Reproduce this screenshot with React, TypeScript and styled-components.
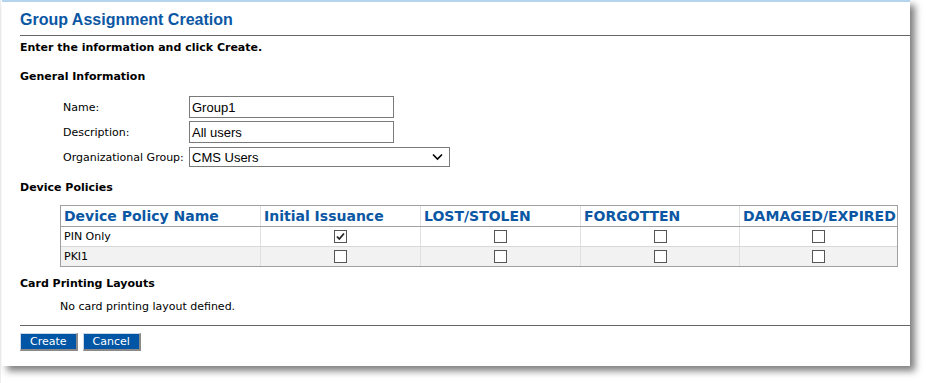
import styled, { createGlobalStyle } from "styled-components";

const GlobalStyle = createGlobalStyle`
  body {
    margin: 0;
    background: #ffffff;
    font-family: "DejaVu Sans", Verdana, sans-serif;
  }
`;

type Policy = {
  name: string;
  checks: boolean[];
};

const policies: Policy[] = [
  { name: "PIN Only", checks: [true, false, false, false] },
  { name: "PKI1", checks: [false, false, false, false] },
];

const columns = [
  "Device Policy Name",
  "Initial Issuance",
  "LOST/STOLEN",
  "FORGOTTEN",
  "DAMAGED/EXPIRED",
];

const Page = styled.div`
  padding: 0 0 17px 0;
  background: #fff;
  border-left: 1px solid #eeeeee;
`;

const Panel = styled.div`
  width: 890px;
  height: 364px;
  margin-left: 1px;
  background: #fff;
  border-top: 2px solid #b5d4ef;
  box-shadow: 5px 5px 7px rgba(0, 0, 0, 0.5);
  padding-left: 18px;
  box-sizing: content-box;
`;

const Title = styled.h1`
  margin: 0;
  padding-top: 8px;
  font-family: "Liberation Sans", Arial, sans-serif;
  font-size: 16px;
  line-height: 20px;
  font-weight: 700;
  color: #0b57a4;
`;

const Rule = styled.div<{ $gap: number }>`
  height: 1px;
  background: #666;
  margin-top: ${(p) => p.$gap}px;
`;

const Heading = styled.div<{ $gap: number }>`
  margin-top: ${(p) => p.$gap}px;
  font-size: 11px;
  line-height: 14px;
  font-weight: 700;
  color: #000;
`;

const Form = styled.div`
  display: grid;
  grid-template-columns: 126px auto;
  grid-auto-rows: 22px;
  row-gap: 3px;
  align-items: center;
  margin: 12px 0 0 43px;
`;

const Label = styled.div`
  font-size: 11px;
  color: #000;
`;

const TextBox = styled.div<{ $width: number; $height?: number }>`
  width: ${(p) => p.$width}px;
  height: ${(p) => p.$height ?? 22}px;
  box-sizing: border-box;
  border: 1px solid #7a7a7a;
  display: flex;
  align-items: center;
  justify-content: space-between;
  padding: 0 6px 0 2px;
  font-family: "Liberation Sans", Arial, sans-serif;
  font-size: 13px;
  color: #000;
`;

const Table = styled.div`
  margin: 10px 0 0 40px;
  width: 838px;
  border: 1px solid #a0a0a0;
  box-sizing: border-box;
`;

const Row = styled.div<{ $shade?: boolean; $head?: boolean }>`
  display: grid;
  grid-template-columns: 199px 160px 160px 159px 1fr;
  height: ${(p) => (p.$head ? 20 : 19)}px;
  background: ${(p) => (p.$shade ? "#f2f2f2" : "#fff")};
  border-top: 1px solid ${(p) => (p.$head ? "transparent" : "#d8d8d8")};
  &:first-child {
    border-top: none;
  }
  &:nth-child(2) {
    border-top-color: #a0a0a0;
  }
`;

const HeadCell = styled.div`
  padding-left: 3px;
  display: flex;
  align-items: center;
  font-size: 14px;
  font-weight: 700;
  color: #0b57a4;
  white-space: nowrap;
  border-left: 1px solid #e0e0e0;
  &:first-child {
    border-left: none;
  }
`;

const Cell = styled.div<{ $center?: boolean }>`
  display: flex;
  align-items: center;
  justify-content: ${(p) => (p.$center ? "center" : "flex-start")};
  padding-left: ${(p) => (p.$center ? 0 : 3)}px;
  font-size: 11px;
  color: #000;
  border-left: 1px solid #e0e0e0;
  &:first-child {
    border-left: none;
  }
`;

const Box = styled.span`
  width: 13px;
  height: 13px;
  box-sizing: border-box;
  border: 1px solid #555;
  background: #fff;
  display: inline-flex;
  align-items: center;
  justify-content: center;
`;

const Note = styled.div`
  margin: 9px 0 0 40px;
  font-size: 11px;
  line-height: 14px;
  color: #000;
`;

const Buttons = styled.div`
  display: flex;
  gap: 5px;
  margin-top: 7px;
`;

const Button = styled.button`
  height: 18px;
  padding: 0 9px;
  background: #0055a4;
  color: #fff;
  font-family: "DejaVu Sans", Verdana, sans-serif;
  font-size: 11px;
  line-height: 14px;
  border-style: solid;
  border-width: 1px 2px 2px 1px;
  border-color: #c9d6e4 #8a8a8a #8a8a8a #c9d6e4;
  cursor: pointer;
`;

const Check = ({ on }: { on: boolean }) => (
  <Box>
    {on && (
      <svg width="11" height="11" viewBox="0 0 11 11">
        <path d="M2 5.5 L4.3 8 L9 2.5" fill="none" stroke="#222" strokeWidth="1.8" />
      </svg>
    )}
  </Box>
);

const Chevron = () => (
  <svg width="11" height="8" viewBox="0 0 11 8">
    <path d="M1 1.5 L5.5 6 L10 1.5" fill="none" stroke="#000" strokeWidth="1.6" />
  </svg>
);

export default function App() {
  return (
    <Page>
      <GlobalStyle />
      <Panel>
        <Title>Group Assignment Creation</Title>
        <Rule $gap={5} />
        <Heading $gap={5}>Enter the information and click Create.</Heading>
        <Heading $gap={15}>General Information</Heading>
        <Form>
          <Label>Name:</Label>
          <TextBox $width={205}>Group1</TextBox>
          <Label>Description:</Label>
          <TextBox $width={205}>All users</TextBox>
          <Label>Organizational Group:</Label>
          <TextBox $width={261} $height={20}>
            CMS Users
            <Chevron />
          </TextBox>
        </Form>
        <Heading $gap={13}>Device Policies</Heading>
        <Table>
          <Row $head>
            {columns.map((c) => (
              <HeadCell key={c}>{c}</HeadCell>
            ))}
          </Row>
          {policies.map((p, i) => (
            <Row key={p.name} $shade={i % 2 === 1}>
              <Cell>{p.name}</Cell>
              {p.checks.map((on, j) => (
                <Cell key={j} $center>
                  <Check on={on} />
                </Cell>
              ))}
            </Row>
          ))}
        </Table>
        <Heading $gap={10}>Card Printing Layouts</Heading>
        <Note>No card printing layout defined.</Note>
        <Rule $gap={11} />
        <Buttons>
          <Button>Create</Button>
          <Button>Cancel</Button>
        </Buttons>
      </Panel>
    </Page>
  );
}
